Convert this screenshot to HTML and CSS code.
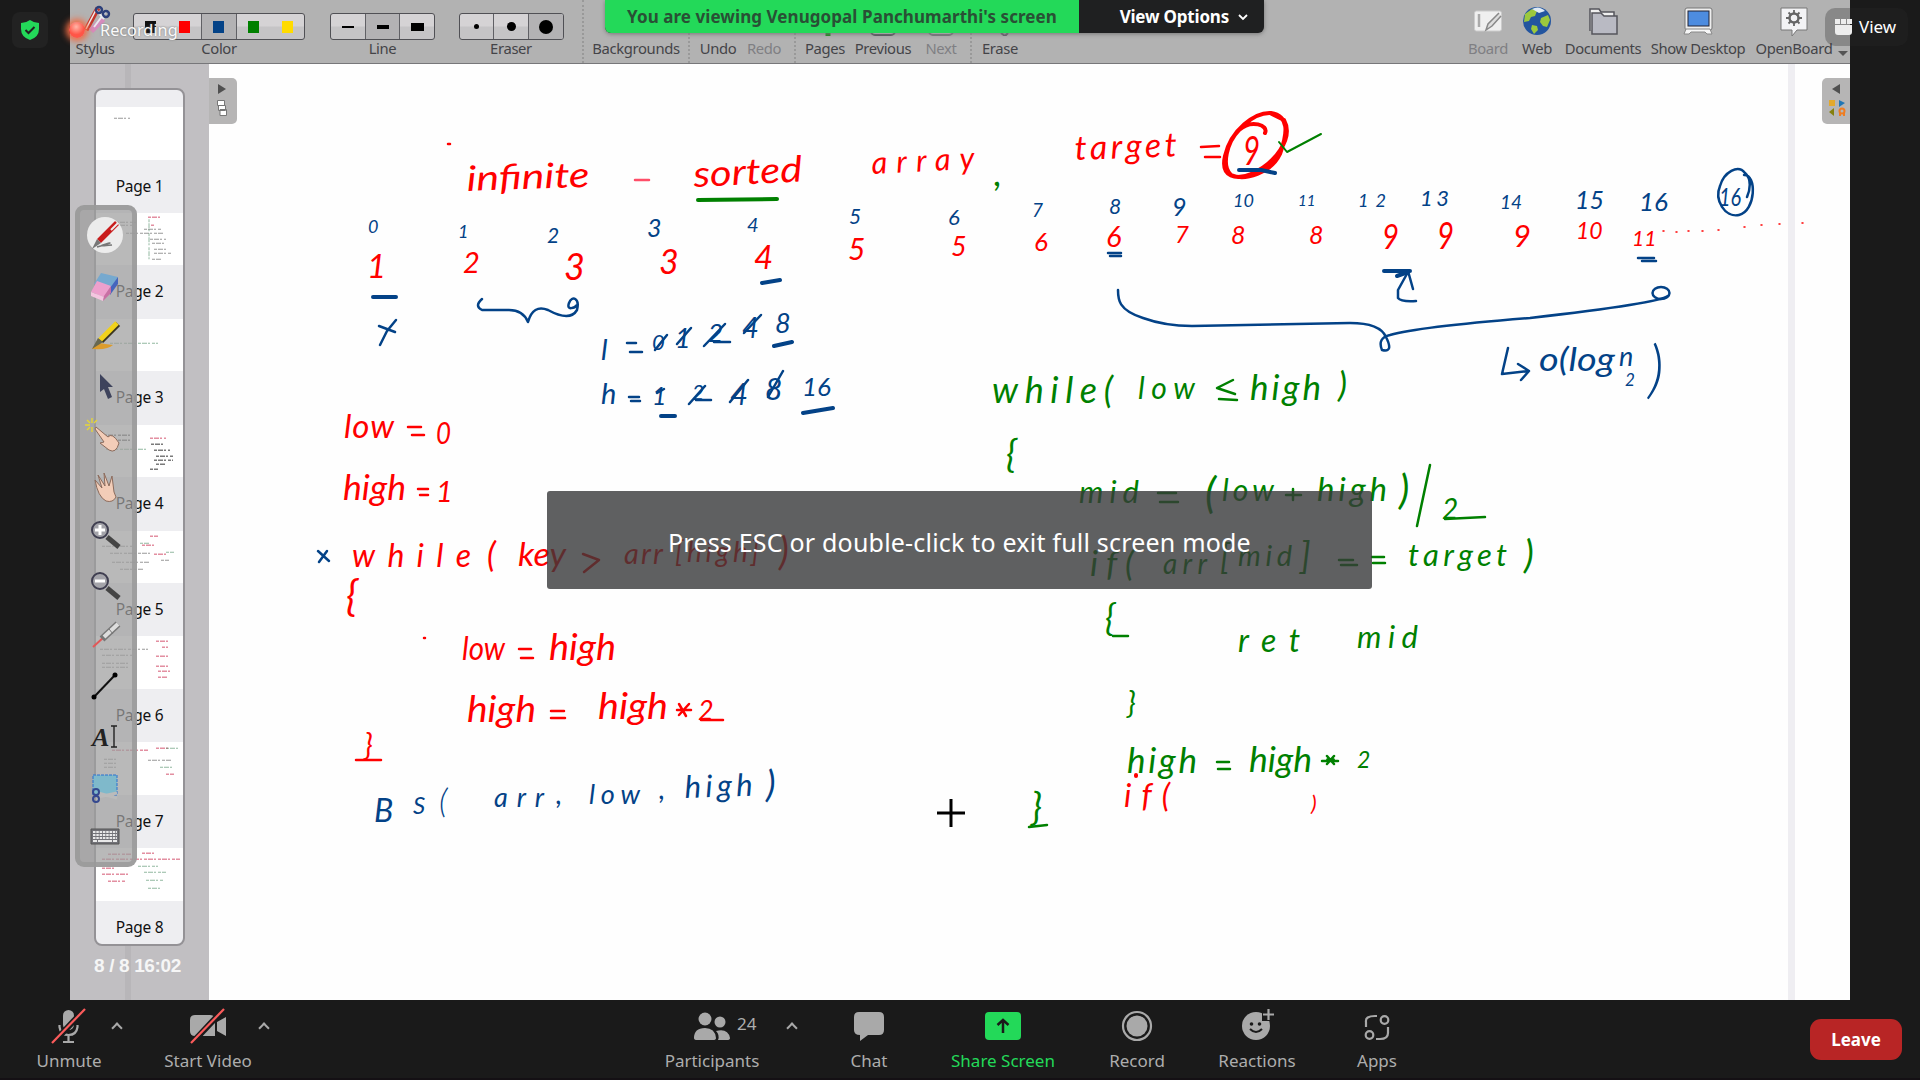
FILE: index.html
```html
<!DOCTYPE html>
<html lang="en">
<head>
<meta charset="utf-8">
<title>Meeting</title>
<link rel="stylesheet" href="styles.css">
</head>
<body>
<div class="meeting">
  <main class="stage">
    <header class="toolbar">
      <div class="tool"><svg class="tool-icon" width="32" height="32" viewBox="0 0 32 32"><path d="M19 3l-12 22" stroke="#c3352c" stroke-width="5"/><path d="M18 3L7 24" stroke="#eee" stroke-width="1.5"/><path d="M24 14L12 26" stroke="#d58bbd" stroke-width="6"/><path d="M15 22L27 6M17 5l8 9" stroke="#e7e9ee" stroke-width="2"/><circle cx="20" cy="5" r="3" fill="none" stroke="#2c3f7a" stroke-width="2.4"/><circle cx="27" cy="9" r="3" fill="none" stroke="#2c3f7a" stroke-width="2.4"/></svg><span>Stylus</span></div>
      <div class="tool"><div class="segments colors"><i><b class="sw black"></b></i><i><b class="sw red"></b></i><i class="on"><b class="sw blue"></b></i><i><b class="sw green"></b></i><i><b class="sw yellow"></b></i></div><span>Color</span></div>
      <div class="tool"><div class="segments three"><i><b class="bar thin"></b></i><i class="on"><b class="bar mid"></b></i><i><b class="bar thick"></b></i></div><span>Line</span></div>
      <div class="tool eraser"><div class="segments three"><i><b class="dot small"></b></i><i><b class="dot medium"></b></i><i class="on"><b class="dot large"></b></i></div><span>Eraser</span></div>
      <div class="tool split"><span>Backgrounds</span></div>
      <div class="tool split"><span>Undo</span></div>
      <div class="tool redo off"><span>Redo</span></div>
      <div class="tool split"><svg class="tool-icon low" width="32" height="32" viewBox="0 0 32 32"><path d="M19 24v9" stroke="#168a16" stroke-width="5"/></svg><span>Pages</span></div>
      <div class="tool"><svg class="tool-icon low" width="32" height="32" viewBox="0 0 32 32"><rect x="4" y="4" width="24" height="27" rx="4" fill="#ddd" stroke="#55555c" stroke-width="2"/></svg><span>Previous</span></div>
      <div class="tool off"><svg class="tool-icon low" width="32" height="32" viewBox="0 0 32 32"><rect x="4" y="4" width="24" height="27" rx="4" fill="#ddd" stroke="#77777c" stroke-width="2"/></svg><span>Next</span></div>
      <div class="tool split"><svg class="tool-icon low" width="32" height="32" viewBox="0 0 32 32"><path d="M17 29l4 3 3-3" fill="none" stroke="#66596a" stroke-width="2"/></svg><span>Erase</span></div>
      <div class="space"></div>
      <div class="tool off"><svg class="tool-icon" width="32" height="32" viewBox="0 0 32 32"><rect x="2.500" y="6" width="27" height="20" rx="2" fill="#efefef" stroke="#ccc"/><path d="M7 9v13" stroke="#aaa" stroke-width="2.500"/><path d="M27 8L16 19l-2 6 6-4L29 11" fill="#ddd" stroke="#888" stroke-width="1.500"/></svg><span>Board</span></div>
      <div class="tool"><svg class="tool-icon" width="32" height="32" viewBox="0 0 32 32"><circle cx="16" cy="16" r="14" fill="#23559f"/><path d="M4 9l7-5 5 2-2 5-4 1-2 4-5 1zM20 13l7-3 2 5-3 7-4-1-3-4zM11 20l5 1 1 4-4 4-3-5z" fill="#9cc83d"/><path d="M11 4q7-4 13 2l-6 2z" fill="#dfeaf5"/></svg><span>Web</span></div>
      <div class="tool"><svg class="tool-icon" width="32" height="32" viewBox="0 0 32 32"><path d="M3 26V4h9l2 3h13v4" fill="#efefef" stroke="#55555c" stroke-width="1.500"/><path d="M5 29V8h9l3 3h13v18z" fill="#b9bac3" stroke="#55555c" stroke-width="1.500"/></svg><span>Documents</span></div>
      <div class="tool"><svg class="tool-icon" width="32" height="32" viewBox="0 0 32 32"><rect x="3" y="3" width="27" height="22" rx="2" fill="#eee" stroke="#777"/><rect x="6" y="6" width="21" height="15" fill="#4d8ce0" stroke="#223"/><path d="M2 29l2-5h24l2 5h-5l-2-2H9l-2 2z" fill="#f7f7f7" stroke="#888"/></svg><span>Show Desktop</span></div>
      <div class="tool"><svg class="tool-icon" width="32" height="32" viewBox="0 0 32 32"><path d="M3 3h26v22H19l-5 6v-6H3z" fill="#f3f3f5" stroke="#777"/><circle cx="16" cy="13" r="4.500" fill="none" stroke="#666" stroke-width="2.500"/><path d="M16 5v4M16 17v4M8 13h4M20 13h4M10.500 7.500l3 3M18.500 15.500l3 3M10.500 18.500l3-3M18.500 10.500l3-3" stroke="#666" stroke-width="1.800"/></svg><span>OpenBoard</span></div>
      <div class="more"></div>
    </header>

    <div class="work">
      <aside class="sidebar">
        <div class="pages">
          <div class="page"><svg viewBox="0 0 87 52"><path d="M18 11h16" class="k1"/></svg><span>Page 1</span></div>
          <div class="page"><svg viewBox="0 0 87 52"><path d="M52 4h12M55 12h3" class="p1"/><path d="M20 9h20M20 12h16M48 16h18M30 20h38M54 26h16M56 30h12M58 36h12M58 40h18M56 46h10" class="k1"/><path d="M53 6v42" class="g1"/></svg><span>Page 2</span></div>
          <div class="page"><svg viewBox="0 0 87 52"><path d="M14 24h48" class="g1"/></svg><span>Page 3</span></div>
          <div class="page"><svg viewBox="0 0 87 52"><path d="M54 13h16" class="p1"/><path d="M8 10h28M8 15h28M55 19h12M58 25h16M60 31h17M58 35h19M60 39h10M54 44h8" class="k2"/><path d="M10 24h40" class="g1"/></svg><span>Page 4</span></div>
          <div class="page"><svg viewBox="0 0 87 52"><path d="M54 5h8M46 14h14M58 23h12" class="p1"/><path d="M6 15h30M14 22h40M16 31h38M24 38h24M65 29h8" class="k1"/><path d="M44 12h10M70 21h8" class="g1"/></svg><span>Page 5</span></div>
          <div class="page"><svg viewBox="0 0 87 52"><path d="M60 5h14M66 11h6M60 20h13M60 30h14M62 35h12M62 41h10" class="p1"/><path d="M4 13h48M6 19h30M6 27h28M6 31h28" class="k1"/></svg><span>Page 6</span></div>
          <div class="page"><svg viewBox="0 0 87 52"><path d="M16 8h36M60 6h12M70 32h8" class="p1"/><path d="M8 17h14M8 21h12M8 25h14M52 18h24" class="k1"/><path d="M70 6h12M64 25h14" class="g1"/></svg><span>Page 7</span></div>
          <div class="page"><svg viewBox="0 0 87 52"><path d="M12 6h24M46 5h14M6 11h78M6 20h14M6 26h26M12 33h18" class="p1"/><path d="M42 18h20M48 24h22M50 32h18M52 40h14" class="g1"/></svg><span>Page 8</span></div>
        </div>
        <p class="counter">8 / 8 16:02</p>
      </aside>

      <section class="board">
        <svg class="ink" viewBox="209 64 1641 936">
          <g class="r">
            <text x="467" y="191" font-size="35" textLength="123" transform="rotate(-2 466 192)" lengthAdjust="spacingAndGlyphs">infinite</text>
            <path d="M635 180h14" class="faint"/><path d="M448 144h2"/>
            <text x="694" y="187" font-size="36" textLength="109" transform="rotate(-3 694 188)" lengthAdjust="spacingAndGlyphs">sorted</text>
            <text x="872" y="174" font-size="31" textLength="103" transform="rotate(-3 872 174)">array</text>
            <text x="1075" y="160" font-size="34" textLength="102" transform="rotate(-2 1075 160)">target</text>
            <path d="M1201 147l18-1M1205 157h15"/>
            <text x="1243" y="165" font-size="40" textLength="17" lengthAdjust="spacingAndGlyphs">9</text>
            <path class="thick" d="M1265 133c4-8-14-14-26-3c-12 12-18 36-8 45c14 6 40-2 49-21c8-22 9-38-9-41c-16-1-40 17-46 43c-5 22 12 24 26 18c24-10 43-36 33-54l-14-7"/>
            <text x="367" y="278" font-size="33">1</text><text x="463" y="273" font-size="29">2</text>
            <text x="564" y="280" font-size="36">3</text><text x="659" y="274" font-size="34">3</text><text x="754" y="269" font-size="33">4</text>
            <text x="848" y="260" font-size="30">5</text><text x="951" y="256" font-size="27">5</text><text x="1034" y="251" font-size="26">6</text>
            <text x="1106" y="247" font-size="29">6</text><text x="1175" y="243" font-size="24">7</text><text x="1231" y="244" font-size="25">8</text>
            <text x="1309" y="244" font-size="25">8</text><text x="1382" y="249" font-size="34" textLength="17" lengthAdjust="spacingAndGlyphs">9</text><text x="1437" y="249" font-size="36" textLength="17" lengthAdjust="spacingAndGlyphs">9</text>
            <text x="1513" y="247" font-size="31">9</text><text x="1576" y="239" font-size="23">10</text><text x="1632" y="246" font-size="21">11</text>
            <path class="dots" d="M1663 231h1M1676 232h1M1688 231h1M1702 231h1M1718 230h1M1744 227h1M1761 225h1M1779 224h1M1802 223h1"/>
            <text x="344" y="438" font-size="33" textLength="50">low</text><path d="M408 427h13M412 435h12"/><text x="436" y="444" font-size="31" textLength="15" lengthAdjust="spacingAndGlyphs">0</text>
            <text x="343" y="500" font-size="34" textLength="63" lengthAdjust="spacingAndGlyphs">high</text><path d="M418 489h10M420 495h8"/><text x="436" y="502" font-size="29">1</text>
            <text x="352" y="567" font-size="32" textLength="119">while</text><text x="487" y="567" font-size="34">(</text>
            <text x="518" y="566" font-size="32" textLength="48" lengthAdjust="spacingAndGlyphs">key</text><path d="M583 554l16 6l-15 12"/>
            <text x="624" y="564" font-size="29" textLength="39">arr</text><text x="675" y="562" font-size="28" textLength="84">[high]</text><text x="779" y="565" font-size="38">)</text>
            <text x="346" y="611" font-size="42">{</text><path d="M424 638h1"/>
            <text x="462" y="660" font-size="33" textLength="43" lengthAdjust="spacingAndGlyphs">low</text><path d="M519 649h12M521 658h12"/><text x="549" y="660" font-size="37" textLength="67" lengthAdjust="spacingAndGlyphs">high</text>
            <text x="467" y="722" font-size="36" textLength="69" lengthAdjust="spacingAndGlyphs">high</text><path d="M551 711h13M551 718h14"/><text x="598" y="719" font-size="36" textLength="70" lengthAdjust="spacingAndGlyphs">high</text>
            <path d="M679 704l7 12M689 704l-10 11M677 710h14"/><text x="698" y="720" font-size="27">2</text><path d="M701 720h22"/>
            <text x="364" y="756" font-size="31">}</text><path d="M356 760h25"/>
            <text x="1124" y="807" font-size="32" textLength="46">if(</text><text x="1311" y="811" font-size="22">)</text><path class="thick" d="M1136 775v1"/>
          </g>
          <g class="b">
            <text x="368" y="233" font-size="18">0</text><text x="458" y="238" font-size="18">1</text><text x="547" y="243" font-size="21">2</text><text x="647" y="237" font-size="25">3</text>
            <text x="747" y="232" font-size="20">4</text><text x="849" y="224" font-size="21">5</text><text x="948" y="225" font-size="22">6</text><text x="1032" y="217" font-size="19">7</text>
            <text x="1109" y="214" font-size="21">8</text><text x="1172" y="216" font-size="25">9</text><text x="1233" y="207" font-size="18">10</text><text x="1298" y="206" font-size="15">11</text>
            <text x="1358" y="207" font-size="18" textLength="28">12</text><text x="1420" y="206" font-size="22" textLength="29">13</text><text x="1500" y="209" font-size="19">14</text><text x="1575" y="209" font-size="25">15</text>
            <text x="1639" y="211" font-size="26">16</text><text x="1719" y="206" font-size="25" textLength="22" lengthAdjust="spacingAndGlyphs">16</text>
            <path d="M1744 175c13-1 12 36-5 40c-14 3-25-15-19-29c4-14 18-22 25-13c7 6 5 17 2 24"/>
            <path class="thick" d="M1239 170h22l14 3M373 297h23M762 283l18-3"/><path d="M1108 253h13M1110 256h11M1638 258h16M1642 261h14"/><path class="thick" d="M774 346l18-4M661 416h14M803 413l30-5"/>
            <path d="M379 326l16 6M396 320l-9 11-7 14"/>
            <path d="M482 299q-8 7 0 11h27q14 0 19 12q5-18 20-12q22 12 29 0c3-12-5-15-8-7c-3 8 6 5 8 2"/>
            <text x="601" y="360" font-size="29">l</text><path d="M627 343h9M630 352h12"/>
            <text x="652" y="350" font-size="22">0</text><text x="675" y="348" font-size="27">1</text><text x="708" y="342" font-size="26">2</text><text x="742" y="338" font-size="29">4</text><text x="775" y="333" font-size="27">8</text>
            <path d="M655 350l12-15M677 344l14-16M704 346l21-22M744 333l17-18M714 342h16"/>
            <text x="601" y="404" font-size="29">h</text><path d="M629 397h10M631 401h9"/><text x="652" y="405" font-size="25">1</text><text x="692" y="400" font-size="21">2</text><text x="730" y="405" font-size="31">4</text><text x="765" y="400" font-size="30">8</text><text x="802" y="396" font-size="26">16</text>
            <path d="M657 393l7-4M689 404l16-18M696 400h15M730 402l18-22M768 397l15-26"/>
            <path class="thick" d="M1384 271h26M1397 276l11-4"/><path d="M1408 272l-10 18v8q3 4 18 3M1408 271l5 18"/>
            <path d="M1118 290c0 9 0 20 25 28q22 8 49 8q100-2 158-3q30 0 36 14q8 16-4 13q-5-12 8-15q28-8 140-17q130-15 138-22"/><ellipse cx="1661" cy="293" rx="8.500" ry="6"/>
            <path d="M1508 348l-6 26l27-3M1518 364l11 7l-8 9"/>
            <text x="1539" y="371" font-size="32" textLength="76" lengthAdjust="spacingAndGlyphs">o(log</text><text x="1619" y="366" font-size="27">n</text><text x="1625" y="386" font-size="17">2</text><text class="light" x="1648" y="391" font-size="64">)</text>
            <path d="M318 551l11 10M327 551l-8 11"/>
            <text x="374" y="822" font-size="32">B</text><text x="413" y="814" font-size="24">S</text><text class="light" x="439" y="813" font-size="34">(</text>
            <text x="494" y="807" font-size="27" textLength="50">arr</text><text x="556" y="804" font-size="28">,</text><text x="589" y="804" font-size="27" textLength="51">low</text><text x="659" y="799" font-size="28">,</text>
            <text x="685" y="798" font-size="31" textLength="68" transform="rotate(-2 685 796)">high</text><text x="766" y="797" font-size="37">)</text>
          </g>
          <g class="g">
            <path class="thick" d="M698 200l79-1"/><text x="994" y="186" font-size="36">,</text>
            <path class="fine" d="M1279 142l8 10l34-18"/>
            <text x="992" y="403" font-size="36" textLength="121">while(</text><text x="1138" y="399" font-size="30" textLength="57">low</text><path d="M1233 380l-16 8l18 6M1219 399l18 1"/>
            <text x="1250" y="400" font-size="35" textLength="71">high</text><text x="1338" y="397" font-size="35">)</text>
            <text x="1006" y="467" font-size="38">{</text>
            <text x="1079" y="503" font-size="31" textLength="60">mid</text><path d="M1158 493h18M1160 502h18"/><text x="1205" y="508" font-size="43">(</text>
            <text x="1222" y="501" font-size="30" textLength="52">low</text><path d="M1286 495h15M1293 489v11"/><text x="1317" y="501" font-size="33" textLength="70">high</text><text x="1399" y="504" font-size="40">)</text>
            <path d="M1430 465l-13 61"/><text x="1442" y="519" font-size="28">2</text><path d="M1445 519l40-2"/>
            <text x="1090" y="576" font-size="35" textLength="44">if(</text><text x="1163" y="574" font-size="28" textLength="44">arr</text><text x="1220" y="569" font-size="34">[</text><text x="1238" y="566" font-size="29" textLength="54">mid</text><text x="1300" y="569" font-size="37">]</text>
            <path d="M1339 560h14M1341 565h16M1372 557h12M1373 563h12"/><text x="1408" y="566" font-size="31" textLength="99">target</text><text x="1524" y="568" font-size="38">)</text>
            <text x="1105" y="631" font-size="36">{</text><path d="M1113 636h15"/><text x="1238" y="652" font-size="32" textLength="62">ret</text><text x="1357" y="648" font-size="31" textLength="61">mid</text>
            <text x="1127" y="714" font-size="31">}</text><text x="1127" y="773" font-size="35" textLength="70">high</text><path d="M1217 762h12M1218 769h12"/>
            <text x="1249" y="772" font-size="35" textLength="63" lengthAdjust="spacingAndGlyphs">high</text><path d="M1322 761h16M1327 756l7 8M1334 756l-7 8"/><path class="thick" d="M1328 760h5"/><text x="1357" y="768" font-size="23">2</text>
            <text x="1031" y="820" font-size="39">}</text><path d="M1029 827l18-2"/>
          </g>
          <path class="cross" d="M937 813h28M951 799v28"/>
        </svg>
        <div class="margin-rule"></div>
        <div class="tab left"><svg width="28" height="46" viewBox="0 0 28 46"><path d="M9 6l8 5-8 5z" fill="#505050"/><path d="M8.500 22.500h7v5h-7zM9.500 27.500h7v5h-7zM11 31.500h6.500v6H11z" fill="#fff" stroke="#777"/></svg></div>
        <div class="tab right"><svg width="28" height="46" viewBox="0 0 28 46"><path d="M18 6l-8 5 8 5z" fill="#505050"/><path d="M7 22h6v6H7z" fill="#e3a92d"/><path d="M17 22l6 3-6 4z" fill="#2076b5"/><path d="M12 30v8l-5-4z" fill="#85800e"/><circle cx="20" cy="33" r="2.500" fill="none" stroke="#ef7d22" stroke-width="2"/><path d="M18 35v3M22 35v3" stroke="#ef7d22" stroke-width="2"/></svg></div>
      </section>
    </div>

    <div class="palette">
      <svg viewBox="0 0 50 50"><circle cx="25" cy="24" r="18" fill="#ececec"/><path d="M17 36q20-6 9-3t6 1" fill="none" stroke="#777" stroke-width="1.500"/><path d="M37 12L19 30" stroke="#c91d1d" stroke-width="5.500"/><path d="M38 12L31 19" stroke="#eee" stroke-width="2"/><path d="M17 28l4 4-9 6z" fill="#777"/></svg>
      <svg viewBox="0 0 50 50"><path d="M21 12l17 4-7 12-17-5z" fill="#76a9cf"/><path d="M38 16v7l-8 11v-7z" fill="#4665bd"/><path d="M17 20l14 5-7 11-13-5z" fill="#eda0cd"/><path d="M11 31l13 5-1 4-12-5z" fill="#f4c6e0"/><path d="M31 25v7l-8 8 1-5z" fill="#c96fa4"/></svg>
      <svg viewBox="0 0 50 50"><path d="M12 38q5-8 13-5l8 1q-5 5-20 4z" fill="#dc9c2c"/><path d="M38 13L21 30" stroke="#3a3520" stroke-width="6"/><path d="M37 12L20 29" stroke="#f1d21b" stroke-width="5"/><path d="M18 27l5 4-11 7z" fill="#686850"/></svg>
      <svg viewBox="0 0 50 50"><path d="M20 13v18l4-3 4 10 4-2-4-10h5z" fill="#3e435c"/></svg>
      <svg viewBox="0 0 50 50"><path d="M12 7v5M12 16v5M5 14h5M7 9l3 3M17 9l-3 3M7 19l3-3" stroke="#e6d636" stroke-width="1.400"/><path d="M16 16l12 10q4-5 11 6-3 11-10 7l-9-7 4-1-9-13z" fill="#f3cdb8" stroke="#8b6b5c"/></svg>
      <svg viewBox="0 0 50 50"><path d="M15 19l7 8-4-13 7 11-1-13 5 13 3-10 2 16 2 5q-3 6-10 4-8-4-11-21z" fill="#f3cdb8" stroke="#8b6b5c"/></svg>
      <svg viewBox="0 0 50 50"><path d="M27 26l12 10" stroke="#444" stroke-width="5"/><circle cx="20" cy="19" r="8" fill="#a4a4aa" stroke="#3f3e50" stroke-width="2"/><path d="M20 14v10M15 19h10" stroke="#fff" stroke-width="3"/></svg>
      <svg viewBox="0 0 50 50"><path d="M27 27l12 10" stroke="#444" stroke-width="5"/><circle cx="20" cy="20" r="8" fill="#a4a4aa" stroke="#3f3e50" stroke-width="2"/><path d="M15 20h10" stroke="#fff" stroke-width="3"/></svg>
      <svg viewBox="0 0 50 50"><path d="M13 36l11-10" stroke="#e25858" stroke-width="2"/><path d="M22 28L38 13" stroke="#777" stroke-width="7"/><path d="M24 26L38 13" stroke="#ddd" stroke-width="4"/><path d="M29 18l4 5" stroke="#777"/></svg>
      <svg viewBox="0 0 50 50"><path d="M14 36L35 14" stroke="#111" stroke-width="2"/><circle cx="14" cy="36" r="2.500"/><circle cx="35" cy="14" r="2.500"/></svg>
      <svg viewBox="0 0 50 50"><text x="12" y="35" class="glyph-a">A</text><path d="M34 15v21M31 15h6M31 36h6" stroke="#222" stroke-width="1.400"/></svg>
      <svg viewBox="0 0 50 50"><rect x="13" y="14" width="24" height="20" fill="#7fb9cb" stroke="#2870d0" stroke-dasharray="3 1"/><path d="M18 36l19-4M18 32l19 5" stroke="#bbb" stroke-width="3"/><circle cx="16" cy="31" r="3" fill="none" stroke="#34488f" stroke-width="2"/><circle cx="16" cy="38" r="3" fill="none" stroke="#34488f" stroke-width="2"/></svg>
      <svg viewBox="0 0 50 50"><path d="M11 18h28v15H11z" fill="#737378" stroke="#555"/><path d="M13 21h24M13 24h24M13 27h24" stroke="#e9e9e9" stroke-width="1.800" stroke-dasharray="2.500 .8"/><path d="M13 30h4M18 30h14M33 30h4" stroke="#e9e9e9" stroke-width="1.800"/></svg>
    </div>

    <div class="notice">Press ESC or double-click to exit full screen mode</div>
    <div class="banner"><span class="viewing">You are viewing Venugopal Panchumarthi's screen</span><span class="options">View Options <svg width="10" height="8" viewBox="0 0 10 8"><path d="M1 2l4 4 4-4" fill="none" stroke="#fff" stroke-width="1.800"/></svg></span></div>
  </main>

  <div class="shield"><svg width="22" height="22" viewBox="0 0 22 22"><path d="M11 1q4 3 9 3v6q0 8-9 11-9-3-9-11V4q5 0 9-3z" fill="#23d959"/><path d="M6.500 11l3 3 6-6" fill="none" stroke="#222" stroke-width="2"/></svg></div>
  <div class="recording"><i></i><span>Recording</span></div>
  <div class="view"><svg width="17" height="16" viewBox="0 0 17 16"><path d="M0 0h5v5H0zM6 0h5v5H6zM12 0h5v5h-5zM0 6h17v7q0 3-3 3H3q-3 0-3-3z" fill="#ededed"/></svg><span>View</span></div>

  <footer class="controls">
    <div class="control"><svg width="36" height="36" viewBox="0 0 36 36"><rect x="12" y="2" width="11" height="20" rx="5.500"/><path d="M8.500 17v2q1 8 9 8t9-8v-2M17.500 27v7M12 34h11" class="line"/><path d="M2 35L34 1" class="cut"/><path d="M1 35L34 1" class="mute"/></svg><span>Unmute</span><b class="caret c1"></b></div>
    <div class="control"><svg width="36" height="36" viewBox="0 0 36 36"><path d="M5 7h15q5 0 5 5v16H5q-5 0-5-5V12q0-5 5-5zM27 14l9-5v19l-9-5z"/><path d="M2 35L34 1" class="cut"/><path d="M1 35L34 1" class="mute"/></svg><span>Start Video</span><b class="caret c3"></b></div>
    <div class="space"></div>
    <div class="control"><svg width="36" height="36" viewBox="0 0 36 36"><circle cx="11" cy="11" r="6.500"/><circle cx="26" cy="14" r="5.500"/><path d="M0 30q0-10 11-10 10 0 11 10 0 2-3 2H3q-3 0-3-2zM24 32q2-5-2-9 12-3 14 7 0 2-3 2z"/></svg><em>24</em><span>Participants</span><b class="caret c2"></b></div>
    <div class="control"><svg width="36" height="36" viewBox="0 0 36 36"><path d="M8 4h20q5 0 5 5v13q0 5-5 5H17l-8 6v-6q-6 0-6-5V9q0-5 5-5z"/></svg><span>Chat</span></div>
    <div class="control share"><svg width="36" height="36" viewBox="0 0 36 36"><rect y="4" width="36" height="28" rx="4"/><path d="M18 25V12M12.500 17l5.500-5 5.500 5" fill="none" stroke="#1a1a1a" stroke-width="2.500"/></svg><span>Share Screen</span></div>
    <div class="control"><svg width="36" height="36" viewBox="0 0 36 36"><circle cx="18" cy="18" r="14" class="line"/><circle cx="18" cy="18" r="10.500"/></svg><span>Record</span></div>
    <div class="control"><svg width="36" height="36" viewBox="0 0 36 36"><circle cx="17" cy="18" r="14"/><path d="M23 0h13v13H23z" fill="#1a1a1a"/><path d="M29.500 1v11M24 6.500h11" class="line"/><circle cx="12.500" cy="16" r="1.800" fill="#1a1a1a"/><circle cx="20.500" cy="16" r="1.800" fill="#1a1a1a"/><path d="M11 21q6 6 12 0" fill="none" stroke="#1a1a1a" stroke-width="2"/></svg><span>Reactions</span></div>
    <div class="control"><svg width="36" height="36" viewBox="0 0 36 36"><path d="M18 8h-2q-10 0-9 6v5M17 31h4q8 0 8-6v-6" class="line"/><circle cx="25.500" cy="12" r="3.800" class="line"/><circle cx="10.500" cy="27" r="3.800" class="line"/></svg><span>Apps</span></div>
    <button class="leave">Leave</button>
  </footer>
</div>
</body>
</html>
```
FILE: styles.css
```css
* { box-sizing: border-box; }
body { margin: 0; background: #1a1a1a; overflow: hidden; font-family: "Open Sans", "Noto Sans", sans-serif; }
.meeting { position: relative; width: 1920px; height: 1080px; display: flex; flex-direction: column; }
.stage { position: relative; width: 1780px; height: 1000px; margin: 0 70px; display: flex; flex-direction: column; }

.toolbar { height: 64px; background: #b2b2b2; border-bottom: 1px solid #77777a; display: grid;
  grid-template-columns: 50px 198px 129px 135px 106px 58px 48px 60px 58px 58px 58px 1fr 50px 48px 84px 106px 86px 13px; }
.tool { display: flex; flex-direction: column; justify-content: flex-end; align-items: center; padding-bottom: 4px;
  font: 14.800px/21px "Noto Sans", sans-serif; letter-spacing: -.35px; color: #444448; white-space: nowrap; }
.tool.eraser { padding-right: 7px; }
.tool.redo { padding-right: 12px; }
.tool.off { color: #7f7f83; }
.tool.split { border-left: 2px dotted #999; }
.tool-icon { margin-bottom: 1px; }
.tool-icon.low { margin-bottom: 2px; }
.segments { display: flex; height: 27px; margin-bottom: -2px; border: 1px solid #505055; border-radius: 3px; overflow: hidden; background: linear-gradient(#d5d3d5 48%, #c5c4c6 52%); }
.tool:has(.segments) { justify-content: flex-start; padding-top: 13px; }
.colors { width: 172px; }
.three { width: 105px; }
.segments i { flex: 1; display: flex; align-items: center; justify-content: center; }
.three i + i { border-left: 1px solid #606065; }
.segments i.on { background: #b3b2b4; }
.colors i.on { border: solid #606065; border-width: 0 1px; }
.sw { width: 11px; height: 12px; }
.black { background: #111; } .red { background: #f00; } .blue { background: #034287; } .green { background: #008000; } .yellow { background: #ffdb00; }
.bar { width: 12px; background: #000; } .thin { height: 2px; } .mid { height: 4px; } .thick { height: 8px; }
b.thick { width: 13px; }
.dot { border-radius: 50%; background: #000; } .small { width: 5px; height: 5px; } .medium { width: 9px; height: 9px; } .large { width: 14px; height: 14px; }
.more { align-self: end; margin: 0 0 7px 1px; width: 9px; border: 5px solid transparent; border-top-color: #555; border-bottom: 0; }

.work { flex: 1; display: flex; }
.sidebar { width: 139px; padding: 24px 0 0 24px; background: linear-gradient(90deg, transparent 55px, #b8b6b9 55px 61px, transparent 61px), #c1bfc2; }
.pages { width: 91px; height: 858px; padding-top: 17px; border: 2px solid #949296; border-radius: 8px; background: #eeeef1; overflow: hidden; }
.page { height: 105.9px; text-align: center; font: 15.500px/52px "Noto Sans", sans-serif; letter-spacing: -.3px; color: #111; display: flex; flex-direction: column; }
.page svg { width: 100%; height: 52.500px; background: #fff; flex: none; }
.page path { fill: none; stroke-dasharray: 3 1 5 1 2 2; opacity: .6; }
.k1 { stroke: #555; } .k2 { stroke: #222; stroke-width: 1.500; } .p1 { stroke: #d04563; stroke-width: 1.300; } .g1 { stroke: #4a8a63; }
.counter { margin: 6px 0 0; font: bold 19px/27px "Liberation Sans", sans-serif; color: #f6f6f6; white-space: nowrap; letter-spacing: -.35px; }

.board { position: relative; flex: 1; background: #fefefe; }
.ink { position: absolute; inset: 0; width: 1641px; height: 936px; }
.ink path, .ink ellipse { fill: none; stroke-width: 2.500; stroke-linecap: round; stroke-linejoin: round; }
.ink text { font-family: Lato, sans-serif; font-style: italic; }
.ink .light { font-weight: 300; }
.r path { stroke: #f00; } .r text { fill: #f00; }
.b path, .b ellipse { stroke: #034287; } .b text { fill: #034287; }
.g path { stroke: #008000; } .g text { fill: #008000; }
.ink .thick { stroke-width: 4; }
.ink .faint { stroke: #ff4e68; }
.ink .dots { stroke-width: 1.500; }
.ink .fine { stroke-width: 2; }
.ink .cross { stroke: #000; stroke-width: 3; stroke-linecap: butt; }
.margin-rule { height: 100%; width: 7px; margin-left: auto; margin-right: 55px; background: #efeef2; }
.tab { position: absolute; top: 14px; width: 28px; height: 46px; background: #b6b5b5; }
.tab.left { left: 0; border-radius: 0 5px 5px 0; }
.tab.right { right: 0; border-radius: 5px 0 0 5px; }
.tab svg { display: block; }

.palette { position: absolute; left: 5px; top: 205px; width: 62px; height: 662px; padding: 1px 0; display: flex; flex-direction: column; align-items: center; border: 5px solid rgba(152,152,152,.8); border-radius: 9px; background: rgba(158,158,158,.72); }
.palette svg { width: 50px; height: 50px; flex: none; margin-left: -2px; }
.glyph-a { font: italic bold 26px "Liberation Serif", serif; fill: #222; }

.notice { position: absolute; left: 477px; top: 491px; width: 825px; height: 98px; border-radius: 3px; background: rgba(55,56,58,.8); color: #fff; font: 25px/98px "Noto Sans", sans-serif; letter-spacing: .2px; text-align: center; white-space: nowrap; padding-top: 2px; }
.banner { position: absolute; left: 535px; top: 0; width: 659px; height: 33px; display: flex; border-radius: 0 0 6px 6px; overflow: hidden; background: #1f2021; font: bold 17px/33px "Noto Sans", sans-serif; white-space: nowrap; box-shadow: 0 1px 4px #777; }
.viewing { width: 474px; background: #23d959; color: #295035; text-align: center; letter-spacing: .07px; }
.options { flex: 1; display: flex; justify-content: flex-end; align-items: center; gap: 9px; padding-right: 16px; color: #fff; letter-spacing: -.2px; }

.shield { position: absolute; left: 12px; top: 12px; width: 36px; height: 36px; border-radius: 8px; background: #222; display: grid; place-items: center; }
.recording { position: absolute; left: 69px; top: 18px; display: flex; align-items: center; gap: 15px; color: #fafafa; font: 16.300px/24px "Noto Sans", sans-serif; text-shadow: 0 0 2px #777; }
.recording i { width: 16px; height: 16px; border-radius: 50%; background: radial-gradient(circle at 45% 30%, #ffb6a8, #ff5547 55%); box-shadow: 0 0 6px 3px #f36c43; }
.view { position: absolute; left: 1825px; top: 8px; width: 83px; height: 38px; padding-left: 10px; border-radius: 10px; background: rgba(40,40,40,.3); display: flex; align-items: center; gap: 7px; color: #fff; font: 17px/22px "Noto Sans", sans-serif; }

.controls { height: 80px; display: grid; grid-template-columns: 138px 140px 356px 156px 158px 110px 158px 82px 158px 1fr; border-bottom: 2px solid #141014; }
.control { position: relative; display: flex; flex-direction: column; align-items: center; padding-top: 8px; color: #adadad; font: 17px/24px "Noto Sans", sans-serif; white-space: nowrap; gap: 5px; }
.control svg { flex: none; fill: #a9a9a9; }
.control .line { fill: none; stroke: #a9a9a9; stroke-width: 2.200; }
.control .cut { stroke: #1a1a1a; stroke-width: 6; }
.control .mute { stroke: #fb5b5b; stroke-width: 2.200; }
.control em { position: absolute; left: 103px; top: 12px; font-style: normal; }
.caret { position: absolute; top: 24px; width: 8px; height: 8px; border: solid #a9a9a9; border-width: 2px 0 0 2px; transform: rotate(45deg); }
.c1 { left: calc(50% + 44px); } .c2 { left: calc(50% + 76px); } .c3 { left: calc(50% + 52px); }
.share { color: #23d959; } .share svg { fill: #23d959; }
.leave { justify-self: end; margin: 19px 18px 0 0; width: 92px; height: 41px; border: 0; border-radius: 11px; background: #b82525; color: #fff; font: bold 17px "Noto Sans", sans-serif; }
```
